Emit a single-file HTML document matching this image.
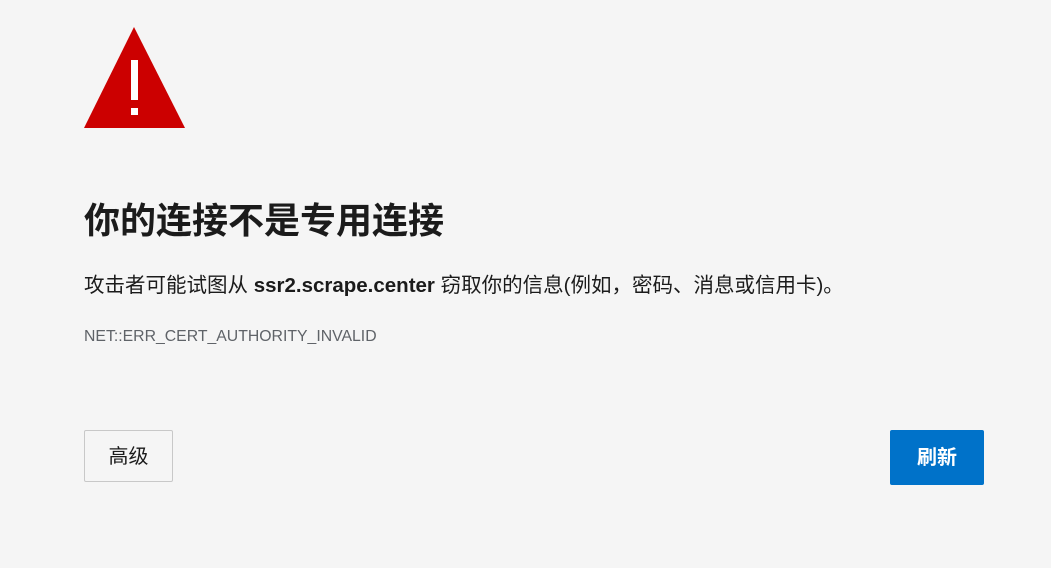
<!DOCTYPE html>
<html><head><meta charset="utf-8"><style>
body{margin:0;background:#f5f5f5;width:1051px;height:568px;overflow:hidden;font-family:"Liberation Sans","Noto Sans CJK SC",sans-serif;color:#1b1b1b;position:relative}
.t{position:absolute;left:84px;top:27px}
h1{position:absolute;left:84px;top:196px;margin:0;font-size:36px;font-weight:bold;line-height:50px;white-space:nowrap}
p{position:absolute;left:84px;top:271px;margin:0;font-size:20.5px;line-height:30px;white-space:nowrap}
.c{position:absolute;left:84px;top:326px;font-size:15.8px;color:#5f6368;line-height:22px}
.b1{position:absolute;left:84px;top:430px;width:87px;height:50px;border:1px solid #c8c8c8;border-radius:2px;font-size:20px;line-height:52px;text-align:center;box-sizing:content-box}
.b2{position:absolute;left:890px;top:430px;width:94px;height:55px;background:#0072c9;border-radius:2px;color:#fff;font-size:20px;font-weight:bold;line-height:57px;text-align:center}
</style></head><body>
<svg class="t" width="102" height="102" viewBox="0 0 102 102"><polygon points="50,0 101,101 0,101" fill="#cc0000"/><rect x="47" y="33" width="7" height="40" fill="#fff"/><rect x="47" y="81" width="7" height="7" fill="#fff"/></svg>
<h1>你的连接不是专用连接</h1>
<p>攻击者可能试图从 <b>ssr2.scrape.center</b> 窃取你的信息(例如，密码、消息或信用卡)。</p>
<div class="c">NET::ERR_CERT_AUTHORITY_INVALID</div>
<div class="b1">高级</div>
<div class="b2">刷新</div>
</body></html>
